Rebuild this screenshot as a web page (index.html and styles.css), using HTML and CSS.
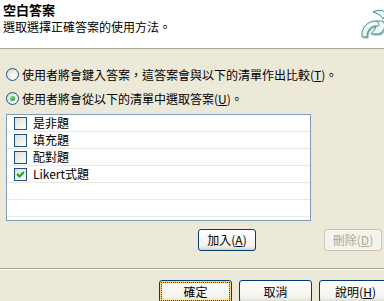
FILE: index.html
```html
<!DOCTYPE html>
<html lang="zh-Hant">
<head>
    <meta charset="UTF-8">
    <title>空白答案</title>
    <link rel="stylesheet" href="styles.css">
</head>
<body>
    <div class="header">
        <div class="header-text">
            <div class="title">空白答案</div>
            <div class="subtitle">選取選擇正確答案的使用方法。</div>
        </div>
        <svg class="logo" width="30" height="30" viewBox="0 0 30 30">
            <path d="M4 28 C3 19 9 12 18 12 L25 12 C28 16 27 22 21 25 L13 25 C15 22 18 20 18 17 C12 17 9 22 9 28 Z" fill="#9fb8b8" transform="translate(1.5,1.5)"/>
            <path d="M15 3 C20 0 27 1 28 5 L25 10 C23 6 19 4 15 3 Z" fill="#eef6f6" stroke="#3f8f90" stroke-width="1"/>
            <path d="M4 28 C3 19 9 12 18 12 L25 12 C28 16 27 22 21 25 L13 25 C15 22 18 20 18 17 C12 17 9 22 9 28 Z" fill="#eef6f6" stroke="#3f8f90" stroke-width="1"/>
            <path d="M18 12 C22 14 22 18 18 17" fill="none" stroke="#3f8f90" stroke-width="1"/>
        </svg>
    </div>

    <div class="content">
        <div class="option">
            <span class="radio"></span>
            <span>使用者將會鍵入答案，這答案會與以下的清單作出比較(<u>T</u>)。</span>
        </div>
        <div class="option">
            <span class="radio checked"></span>
            <span>使用者將會從以下的清單中選取答案(<u>U</u>)。</span>
        </div>

        <div class="listbox">
            <div class="row"><span class="check"></span>是非題</div>
            <div class="row"><span class="check"></span>填充題</div>
            <div class="row"><span class="check"></span>配對題</div>
            <div class="row">
                <span class="check">
                    <svg width="11" height="11" viewBox="0 0 11 11"><path d="M2 5 L4.5 7.5 L9 3" fill="none" stroke="#21a121" stroke-width="2"/></svg>
                </span>Likert式題
            </div>
            <div class="row"></div>
            <div class="row"></div>
        </div>

        <div class="list-buttons">
            <button class="btn add-btn">加入(<u>A</u>)</button>
            <button class="btn" disabled>刪除(<u>D</u>)</button>
        </div>
    </div>

    <div class="footer">
        <button class="btn wide default">確定</button>
        <button class="btn wide">取消</button>
        <button class="btn wide">說明(<u>H</u>)</button>
    </div>
</body>
</html>
```

FILE: styles.css
```css
    body {
        margin: 0;
        width: 384px;
        height: 301px;
        overflow: hidden;
        background: #ece9d8;
        font-family: "Noto Sans CJK TC", "Liberation Sans", sans-serif;
        font-size: 12px;
        color: #000;
    }

    /* Wizard header */
    .header {
        height: 48px;
        background: #fff;
        border-bottom: 1px solid #aca899;
        display: flex;
        justify-content: space-between;
        padding-left: 3px;
    }

    .header-text {
        padding-top: 1px;
    }

    .title {
        font-weight: bold;
        font-size: 13px;
        line-height: 17px;
    }

    .subtitle {
        line-height: 17px;
    }

    .logo {
        margin-top: 9px;
        margin-right: -4px;
        flex: none;
    }

    .content {
        padding: 17px 0 0 6px;
    }

    .option {
        display: flex;
        align-items: center;
        gap: 3px;
        height: 16px;
        margin-bottom: 8px;
        white-space: nowrap;
    }

    .radio {
        width: 11px;
        height: 11px;
        border: 1px solid #1c5180;
        border-radius: 50%;
        background: radial-gradient(circle at 70% 70%, #fff 0%, #f0efe8 40%, #d5d3cb 100%);
        display: flex;
        align-items: center;
        justify-content: center;
        flex: none;
    }

    .radio.checked::after {
        content: "";
        width: 5px;
        height: 5px;
        border-radius: 50%;
        background: radial-gradient(circle at 35% 35%, #8ee58e, #21a121 70%);
    }

    /* List with check boxes */
    .listbox {
        margin-top: 2px;
        width: 305px;
        height: 107px;
        box-sizing: border-box;
        border: 1px solid #7f9db9;
        background: #fff;
    }

    .row {
        height: 16px;
        border-bottom: 1px solid #ebe9dc;
        display: flex;
        align-items: center;
        padding-left: 7px;
        gap: 6px;
        line-height: 16px;
    }

    .check {
        width: 11px;
        height: 11px;
        border: 1px solid #1c5180;
        background: linear-gradient(135deg, #dcdcd7, #fff);
        display: flex;
        flex: none;
    }

    .list-buttons {
        display: flex;
        margin-top: 8px;
        padding-left: 192px;
        gap: 68px;
    }

    .btn {
        font-family: "Noto Sans CJK TC", "Liberation Sans", sans-serif;
        font-size: 12px;
        color: #000;
        width: 58px;
        height: 22px;
        padding: 0;
        border: 1px solid #003c74;
        border-radius: 3px;
        background: linear-gradient(#ffffff, #f3f2ec 80%, #d8d4c8);
        line-height: 18px;
    }

    .btn:disabled {
        color: #aca899;
        border-color: #c9c7ba;
        background: #f5f4ea;
    }

    .footer {
        margin-top: 17px;
        border-top: 1px solid #aca899;
        box-shadow: inset 0 1px #fff;
        padding: 11px 0 0 159px;
        display: flex;
        gap: 7px;
    }

    .wide {
        width: 73px;
        height: 23px;
        flex: none;
    }

    .default {
        box-shadow: inset 0 0 0 1px #fbd88c, inset 0 0 0 2px #f6c35e;
        outline: 1px dotted #444;
        outline-offset: -3px;
    }
```
